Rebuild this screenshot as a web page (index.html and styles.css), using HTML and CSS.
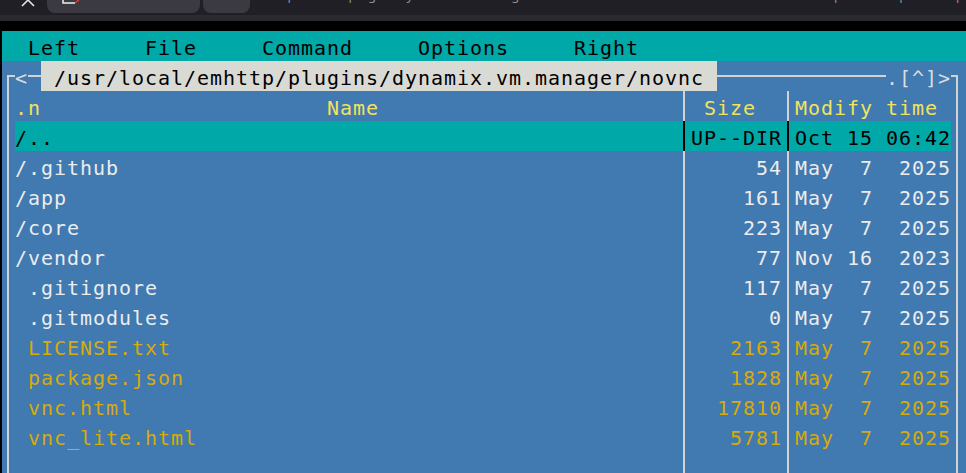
FILE: index.html
```html
<!DOCTYPE html>
<html>
<head>
  <title>mc - /usr/local/emhttp/plugins/dynamix.vm.manager/novnc</title>
  <link rel="stylesheet" href="styles.css">
</head>
<body>
  <!-- browser chrome, cut off at the top -->
  <div class="chrome">
    <svg class="close" width="18" height="15" viewBox="0 0 18 15">
      <path d="M3 6 L9 0 L15 6" fill="none" stroke="#e6e6e6" stroke-width="1.6"/>
    </svg>
    <div class="tab tab-main">
      <svg class="tab-icon" width="20" height="6" viewBox="0 0 20 6">
        <path d="M1 0 V3 H13" fill="none" stroke="#f0f0f0" stroke-width="1.5"/>
        <path d="M13 3 L17 0" fill="none" stroke="#e53935" stroke-width="1.5"/>
      </svg>
    </div>
    <div class="tab tab-new"></div>
    <div class="url">http://tower/plugins/dynamix.vm.manager/novnc/vnc.html?autoconnect=true&amp;host=tower&amp;port=443&amp;path=/wsproxy/5700/</div>
  </div>
  <div class="strip"></div>
  <div class="gap"></div>

  <div class="term">
    <div class="menubar">  Left     File     Command     Options     Right</div>

    <div class="panel">
      <div class="row top">
        <span class="cell tl"></span><span class="cell txt">&lt;</span><span class="cell hl"></span><span class="path"> /usr/local/emhttp/plugins/dynamix.vm.manager/novnc </span><span class="hl hl-fill"></span><span class="txt marks">.[^]&gt;</span><span class="cell tr"></span>
      </div>

      <div class="row head">
        <span class="cell vl"></span><span class="name">.n                      Name</span><span class="cell vl"></span><span class="size"> Size</span><span class="cell vl"></span><span class="date">Modify time</span><span class="cell vl"></span>
      </div>

      <div class="row sel">
        <span class="cell vl"></span><span class="name">/..</span><span class="cell vl"></span><span class="size">UP--DIR</span><span class="cell vl"></span><span class="date">Oct 15 06:42</span><span class="cell vl"></span>
      </div>

      <div class="row">
        <span class="cell vl"></span><span class="name">/.github</span><span class="cell vl"></span><span class="size">54</span><span class="cell vl"></span><span class="date">May  7  2025</span><span class="cell vl"></span>
      </div>
      <div class="row">
        <span class="cell vl"></span><span class="name">/app</span><span class="cell vl"></span><span class="size">161</span><span class="cell vl"></span><span class="date">May  7  2025</span><span class="cell vl"></span>
      </div>
      <div class="row">
        <span class="cell vl"></span><span class="name">/core</span><span class="cell vl"></span><span class="size">223</span><span class="cell vl"></span><span class="date">May  7  2025</span><span class="cell vl"></span>
      </div>
      <div class="row">
        <span class="cell vl"></span><span class="name">/vendor</span><span class="cell vl"></span><span class="size">77</span><span class="cell vl"></span><span class="date">Nov 16  2023</span><span class="cell vl"></span>
      </div>
      <div class="row">
        <span class="cell vl"></span><span class="name"> .gitignore</span><span class="cell vl"></span><span class="size">117</span><span class="cell vl"></span><span class="date">May  7  2025</span><span class="cell vl"></span>
      </div>
      <div class="row">
        <span class="cell vl"></span><span class="name"> .gitmodules</span><span class="cell vl"></span><span class="size">0</span><span class="cell vl"></span><span class="date">May  7  2025</span><span class="cell vl"></span>
      </div>
      <div class="row gold">
        <span class="cell vl"></span><span class="name"> LICENSE.txt</span><span class="cell vl"></span><span class="size">2163</span><span class="cell vl"></span><span class="date">May  7  2025</span><span class="cell vl"></span>
      </div>
      <div class="row gold">
        <span class="cell vl"></span><span class="name"> package.json</span><span class="cell vl"></span><span class="size">1828</span><span class="cell vl"></span><span class="date">May  7  2025</span><span class="cell vl"></span>
      </div>
      <div class="row gold">
        <span class="cell vl"></span><span class="name"> vnc.html</span><span class="cell vl"></span><span class="size">17810</span><span class="cell vl"></span><span class="date">May  7  2025</span><span class="cell vl"></span>
      </div>
      <div class="row gold">
        <span class="cell vl"></span><span class="name"> vnc_lite.html</span><span class="cell vl"></span><span class="size">5781</span><span class="cell vl"></span><span class="date">May  7  2025</span><span class="cell vl"></span>
      </div>
      <div class="row">
        <span class="cell vl"></span><span class="name"></span><span class="cell vl"></span><span class="size"></span><span class="cell vl"></span><span class="date"></span><span class="cell vl"></span>
      </div>
    </div>
  </div>
</body>
</html>
```

FILE: styles.css
```css
body {
  margin: 0;
  background: #000;
  overflow: hidden;
}

/* browser chrome */
.chrome {
  display: flex;
  align-items: flex-start;
  height: 15px;
  background: #1f1f25;
  overflow: hidden;
}
.close {
  margin-left: 19px;
  flex: none;
}
.tab {
  flex: none;
  height: 13px;
  background: #3b3a42;
  border-radius: 0 0 8px 8px;
}
.tab-main {
  margin-left: 10px;
  width: 153px;
}
.tab-icon {
  display: block;
  margin-left: 15px;
}
.tab-new {
  margin-left: 3px;
  width: 47px;
}
.url {
  margin-left: 20px;
  margin-top: -12px;
  font: 13px/15px "Noto Sans", sans-serif;
  color: #8e8e96;
  white-space: nowrap;
}
.strip {
  height: 6px;
  background: #2b2a31;
}
.gap {
  height: 10px;
}

/* terminal */
.term {
  margin-left: 2px;
  font-family: "DejaVu Sans Mono", monospace;
  font-size: 20px;
  letter-spacing: 0.96px;
}
.menubar {
  height: 30px;
  line-height: 34px;
  background: #00a8a8;
  color: #000;
  white-space: pre;
}
.panel {
  background: #4179b1;
  color: #ececec;
}

.row {
  display: flex;
  height: 30px;
  line-height: 34px;
}
.row > span {
  flex: none;
  height: 30px;
  white-space: pre;
}
.cell {
  width: 13px;
}
.name {
  width: 663px;
}
.size {
  width: 91px;
  text-align: right;
}
.date {
  width: 156px;
}

/* box drawing */
.vl {
  background: linear-gradient(#d2d2d2, #d2d2d2) 5px 0 / 2px 100% no-repeat;
}
.hl {
  background: linear-gradient(#d2d2d2, #d2d2d2) 0 14px / 100% 2px no-repeat;
}
.hl-fill {
  width: 169px;
}
.tl {
  background:
    linear-gradient(#d2d2d2, #d2d2d2) 5px 14px / 8px 2px no-repeat,
    linear-gradient(#d2d2d2, #d2d2d2) 5px 14px / 2px 16px no-repeat;
}
.tr {
  background:
    linear-gradient(#d2d2d2, #d2d2d2) 0 14px / 7px 2px no-repeat,
    linear-gradient(#d2d2d2, #d2d2d2) 5px 14px / 2px 16px no-repeat;
}
.txt {
  color: #dcdcdc;
}
.marks {
  width: 65px;
}
.path {
  width: 676px;
  background: #dadad5;
  color: #000;
}

/* rows */
.head {
  color: #f1e35c;
}
.head .size {
  text-align: left;
}
.sel {
  color: #000;
}
.sel .name,
.sel .size,
.sel .date {
  background: #00a8a8;
}
.sel .vl {
  background: linear-gradient(#000, #000) 5px 0 / 2px 100% no-repeat, #00a8a8;
}
.sel .vl:first-child,
.sel .vl:last-child {
  background: linear-gradient(#d2d2d2, #d2d2d2) 5px 0 / 2px 100% no-repeat;
}
.gold {
  color: #d6ab0c;
}
```
